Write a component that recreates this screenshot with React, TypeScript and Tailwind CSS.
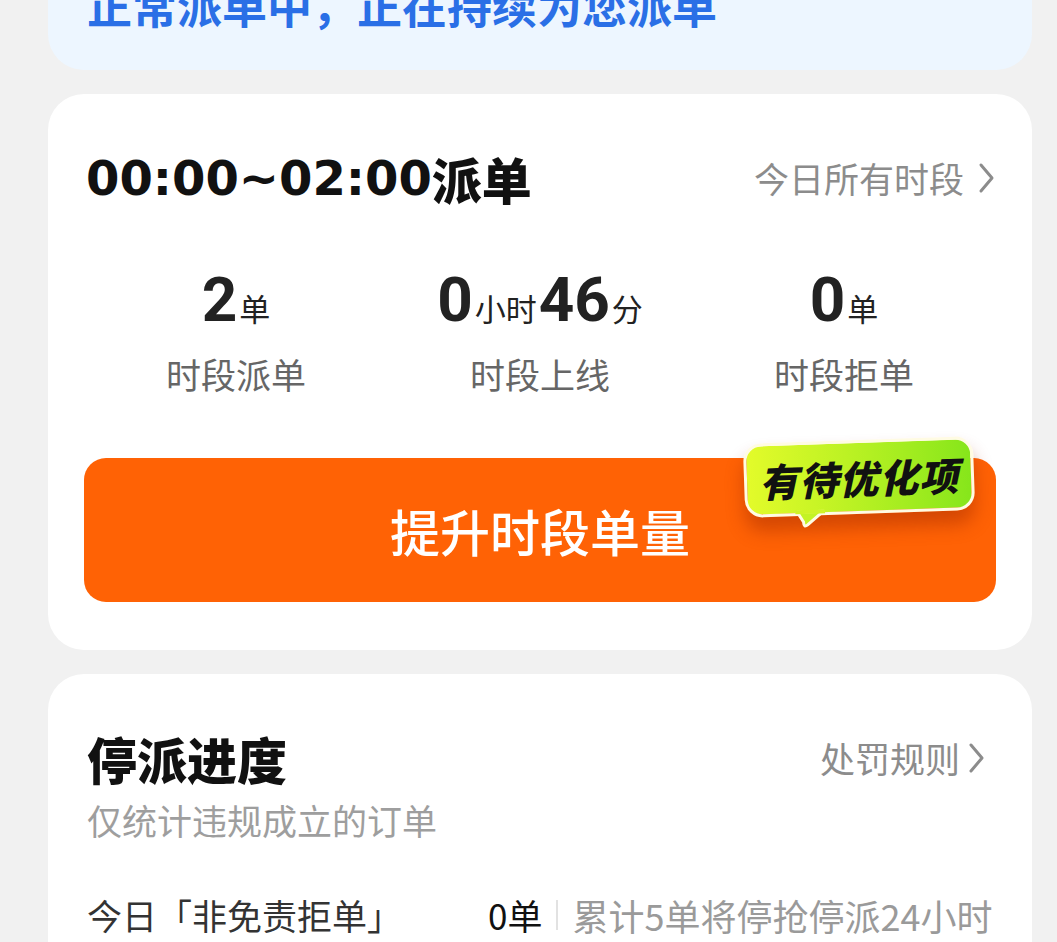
import React from 'react';

const cjk = '"Noto Sans CJK SC", "Noto Sans", sans-serif';

function Chevron({ className = '' }: { className?: string }) {
    return (
        <svg width="20" height="34" viewBox="0 0 20 34" className={className}>
            <polyline points="5,4 16,17 5,30" fill="none" stroke="#8c8c8c" strokeWidth="3" strokeLinecap="round" strokeLinejoin="round" />
        </svg>
    );
}

function Stat({ children, label }: { children: React.ReactNode; label: string }) {
    return (
        <div className="flex flex-col items-center">
            <div className="flex items-baseline h-[64px] text-[#222]">{children}</div>
            <div className="mt-[20px] text-[35px] leading-[44px] text-[#666]">{label}</div>
        </div>
    );
}

const num = 'font-["Roboto",sans-serif] font-bold text-[62px] leading-[64px] text-[#222]';

export default function App() {
    return (
        <div className="min-h-screen bg-[#f1f1f1] pl-[48px] pr-[25px] pb-10 overflow-hidden" style={{ fontFamily: cjk }}>
            {/* top status card, scrolled partly out of view */}
            <div className="-mt-[57px] rounded-[36px] bg-[#edf6ff] px-[39px] pt-[40px] pb-[43px]">
                <div className="text-[45px] leading-[44px] font-bold text-[#2a6fe6]">正常派单中，正在持续为您派单</div>
            </div>

            {/* period card */}
            <div className="mt-[24px] rounded-[36px] bg-white px-[36px] pt-[56px] pb-[48px]">
                <div className="flex h-[56px] items-center justify-between">
                    <div className="ml-[2px] flex items-center text-[#111]">
                        <span className='font-["DejaVu_Sans",sans-serif] font-bold text-[48px] leading-[56px]'>00:00~02:00</span>
                        <span className="text-[50px] leading-[56px] font-black">派单</span>
                    </div>
                    <div className="flex items-center text-[35px] text-[#8c8c8c]">
                        今日所有时段
                        <Chevron className="ml-[12px]" />
                    </div>
                </div>

                <div className="mt-[62px] grid grid-cols-3">
                    <Stat label="时段派单">
                        <span className={num}>2</span>
                        <span className="text-[31px] ml-[2px]">单</span>
                    </Stat>
                    <Stat label="时段上线">
                        <span className={num}>0</span>
                        <span className="text-[31px] mx-[2px]">小时</span>
                        <span className={num}>46</span>
                        <span className="text-[31px] ml-[2px]">分</span>
                    </Stat>
                    <Stat label="时段拒单">
                        <span className={num}>0</span>
                        <span className="text-[31px] ml-[2px]">单</span>
                    </Stat>
                </div>

                <div className="relative mt-[62px]">
                    <button className="flex h-[144px] w-full items-center justify-center rounded-[22px] bg-[#ff6205] text-[50px] font-medium text-white">
                        提升时段单量
                    </button>
                    {/* badge bubble */}
                    <div className="absolute -top-[18px] right-[22px] -rotate-2">
                        <div className="relative rounded-[18px] border-[3px] border-[#fffbe3] bg-gradient-to-r from-[#e3fb2a] to-[#86e61b] px-[12px] h-[74px] flex items-center shadow-[0_14px_18px_rgba(160,40,0,0.45)]">
                            <span className="text-[39px] font-black italic text-[#111] tracking-[1px]">有待优化项</span>
                        </div>
                        <svg width="30" height="18" viewBox="0 0 30 18" className="absolute left-[50px] top-[68px]">
                            <path d="M2 2 L28 2 L12 15 Q8 18 8 12 Z" fill="#c4f325" stroke="#fffbe3" strokeWidth="3" strokeLinejoin="round" />
                            <rect x="0" y="0" width="30" height="4" fill="#cff427" />
                        </svg>
                    </div>
                </div>
            </div>

            {/* stop dispatch card */}
            <div className="mt-[24px] rounded-[36px] bg-white px-[36px] pt-[56px] pb-[40px]">
                <div className="flex h-[56px] items-center justify-between">
                    <div className="ml-[3px] text-[50px] leading-[56px] font-black text-[#111]">停派进度</div>
                    <div className="mr-[10px] flex items-center text-[35px] text-[#8c8c8c]">
                        处罚规则
                        <Chevron className="ml-[6px]" />
                    </div>
                </div>
                <div className="ml-[3px] mt-[12px] text-[35px] leading-[44px] text-[#9e9e9e]">仅统计违规成立的订单</div>

                <div className="ml-[3px] mt-[51px] flex items-center leading-[44px]">
                    <div className="w-[401px] text-[35px] text-[#333]">今日「非免责拒单」</div>
                    <div className="text-[35px] text-[#111]">0单</div>
                    <div className="mx-[14px] h-[30px] w-[2px] bg-[#e2e2e2]" />
                    <div className="text-[36px] text-[#9a9a9a]">累计5单将停抢停派24小时</div>
                </div>
            </div>
        </div>
    );
}
